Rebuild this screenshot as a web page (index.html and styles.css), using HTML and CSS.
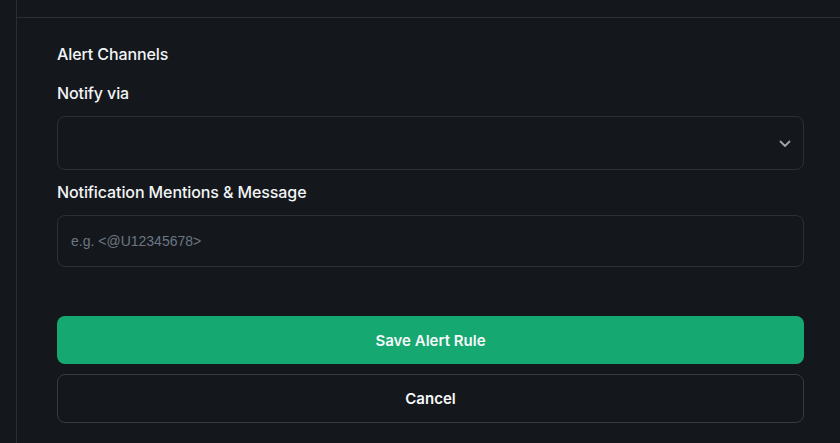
FILE: index.html
```html
<!DOCTYPE html>
<html>
<head>
<meta charset="utf-8">
<link rel="stylesheet" href="styles.css">
</head>
<body>
<div class="shell">
  <div class="gutter"></div>
  <div class="panel">
    <div class="topbar"></div>
    <div class="content">
      <h2 class="section-title">Alert Channels</h2>
      <label class="field-label">Notify via</label>
      <div class="select">
        <svg class="chevron" width="12" height="8" viewBox="0 0 12 8"><path d="M1.5 1.5 L6 6 L10.5 1.5" fill="none" stroke="#9aa4b0" stroke-width="1.8" stroke-linecap="round" stroke-linejoin="round"/></svg>
      </div>
      <label class="field-label">Notification Mentions &amp; Message</label>
      <div class="input"><span class="placeholder">e.g. &lt;@U12345678&gt;</span></div>
      <div class="actions">
        <button class="btn btn-primary">Save Alert Rule</button>
        <button class="btn btn-secondary">Cancel</button>
      </div>
    </div>
  </div>
</div>
</body>
</html>
```
FILE: styles.css
```css
* { box-sizing: border-box; }
html, body {
  margin: 0;
  padding: 0;
  background: #14181c;
  height: 100%;
  overflow: hidden;
}
body {
  font-family: Inter, "Noto Sans", sans-serif;
  color: #f2f4f6;
}
.shell {
  display: flex;
  height: 443px;
}
.gutter {
  width: 16px;
  flex: none;
}
.panel {
  flex: 1;
  border-left: 1px solid #2a2f35;
  display: flex;
  flex-direction: column;
}
.topbar {
  height: 18px;
  border-bottom: 1px solid #2a2f35;
  flex: none;
}
.content {
  padding: 25px 36px 0 40px;
  display: flex;
  flex-direction: column;
}
.section-title {
  margin: 0;
  font-size: 16px;
  font-weight: 500;
  line-height: 22px;
  letter-spacing: -0.1px;
}
.field-label {
  display: block;
  font-size: 16px;
  font-weight: 500;
  line-height: 22px;
  letter-spacing: -0.1px;
  margin-top: 17px;
  margin-bottom: 12px;
}
.select + .field-label {
  margin-top: 11px;
}
.select {
  height: 54px;
  border: 1px solid #2b3036;
  border-radius: 8px;
  display: flex;
  align-items: center;
  justify-content: flex-end;
  padding-right: 12px;
}
.chevron { display: block; margin-top: 1px; }
.input {
  height: 52px;
  border: 1px solid #2b3036;
  border-radius: 8px;
  display: flex;
  align-items: center;
  padding-left: 13px;
}
.placeholder {
  color: #6b7682;
  font-family: "Liberation Sans", Arial, sans-serif;
  font-size: 14px;
}
.actions {
  margin-top: 49px;
  display: flex;
  flex-direction: column;
  gap: 10px;
}
.btn {
  height: 48px;
  border-radius: 8px;
  font-family: Inter, "Noto Sans", sans-serif;
  font-size: 15px;
  font-weight: 600;
  color: #f6f8fa;
  cursor: pointer;
}
.btn-primary {
  background: #15a870;
  border: none;
}
.btn-secondary {
  background: transparent;
  border: 1px solid #363b42;
  height: 49px;
}
```
